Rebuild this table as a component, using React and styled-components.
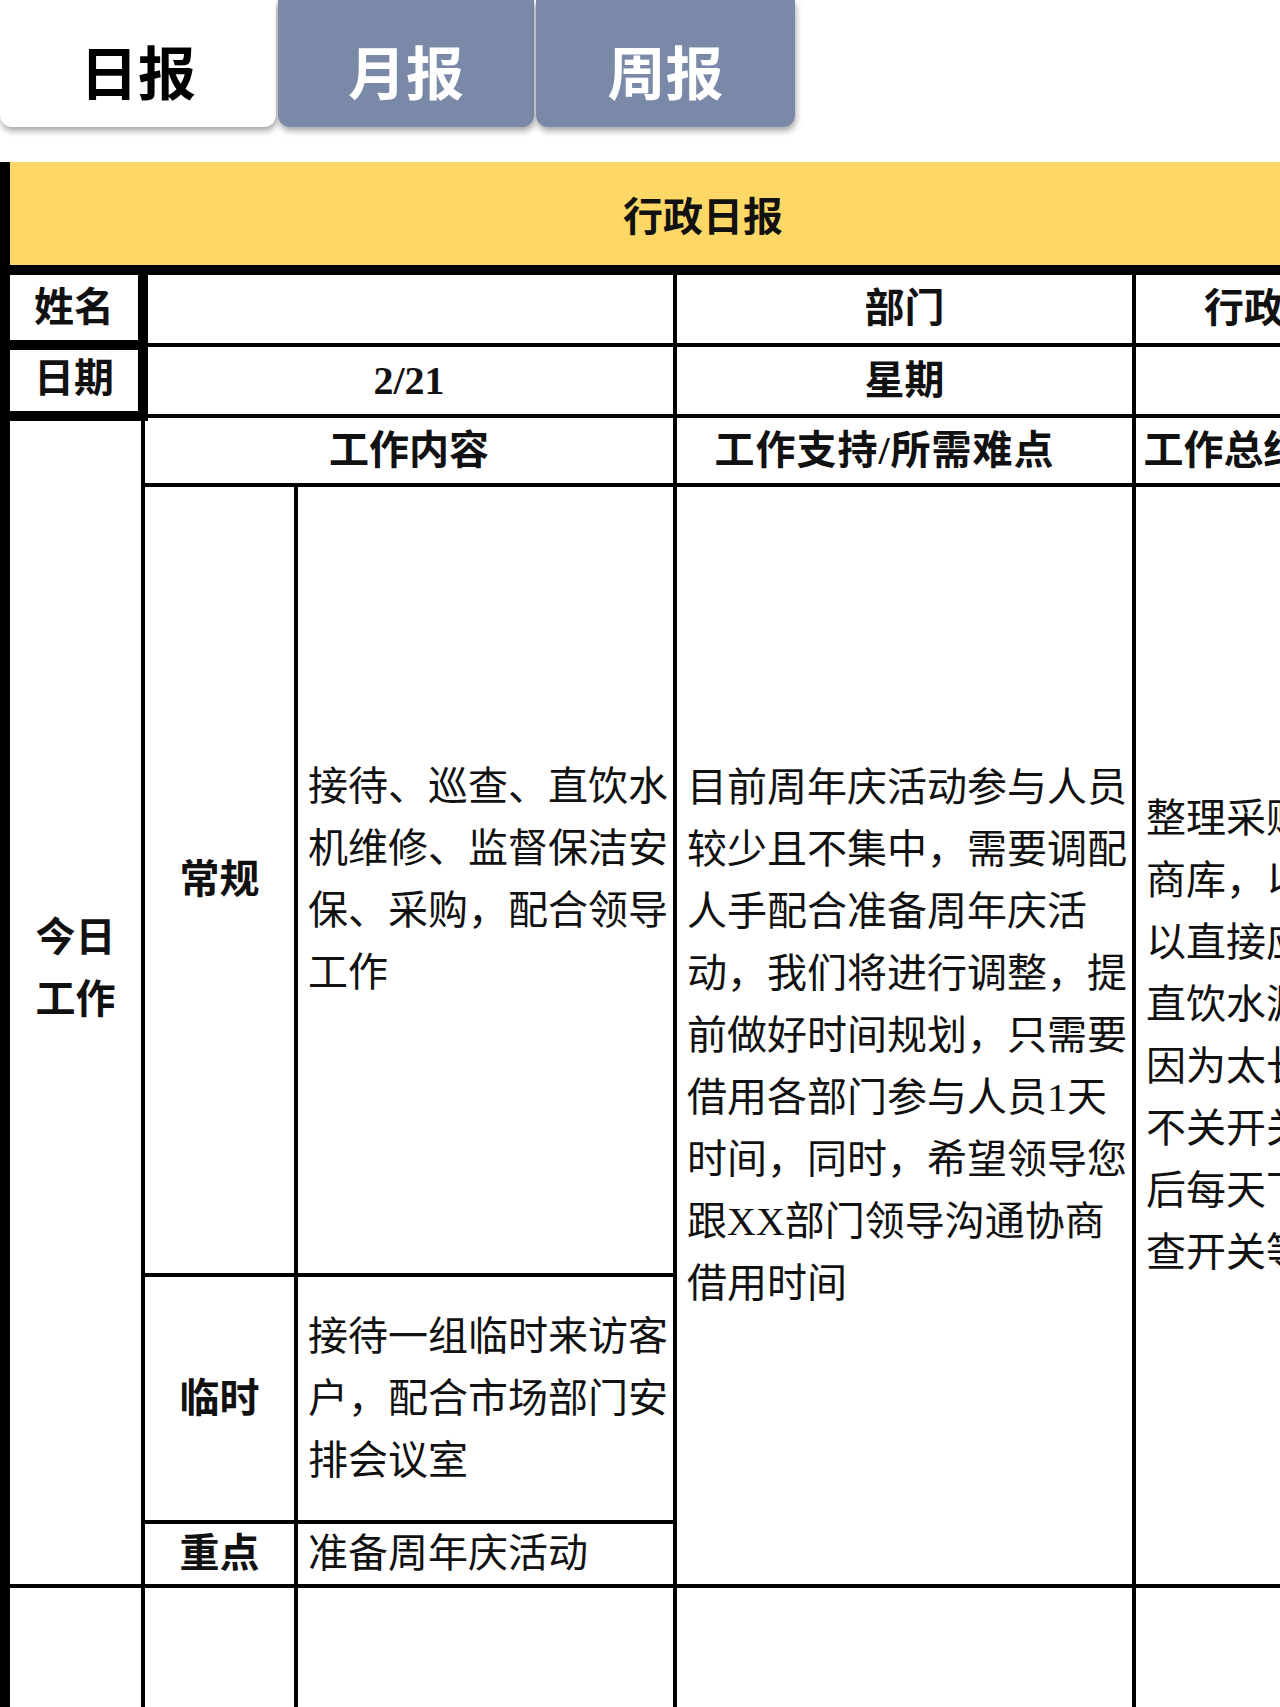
import React from 'react';
import styled, { createGlobalStyle } from 'styled-components';

const GlobalStyle = createGlobalStyle`
  html,
  body {
    margin: 0;
    padding: 0;
    background: #fff;
  }
  body {
    font-family: 'Liberation Serif', 'Noto Sans CJK SC', sans-serif;
    color: #111;
  }
  * {
    box-sizing: border-box;
  }
`;

const Page = styled.div`
  width: 1280px;
  height: 1707px;
  overflow: hidden;
  background: #fff;
`;

const TabBar = styled.div`
  display: flex;
  gap: 2px;
  height: 127px;
  margin-bottom: 35px;
`;

const Tab = styled.div`
  display: flex;
  justify-content: center;
  align-items: center;
  width: ${(props) => props.$width}px;
  padding-top: 12px;
  border-radius: 0 0 12px 12px;
  background-color: ${(props) => (props.$active ? '#ffffff' : '#7b89a9')};
  color: ${(props) => (props.$active ? '#000000' : '#ffffff')};
  box-shadow: 1px 4px 6px rgba(0, 0, 0, 0.35);
  font-family: 'Noto Sans CJK SC', sans-serif;
  font-size: 58px;
  font-weight: 700;
`;

const Sheet = styled.div`
  width: 1406px;
  border-left: 10px solid #000;
`;

const Title = styled.div`
  display: flex;
  justify-content: center;
  align-items: center;
  height: 113px;
  padding-right: 10px;
  background-color: #fdd866;
  border-bottom: 10px solid #000;
  font-family: 'Noto Sans CJK SC', sans-serif;
  font-size: 40px;
  font-weight: 700;
  color: #111;
`;

const Grid = styled.div`
  display: grid;
  grid-template-columns: 135px 153px 379px 459px 270px;
  grid-template-rows: 72px 71px 69px 790px 247px 64px 200px;
`;

const Cell = styled.div`
  grid-column: ${(props) => props.$col};
  grid-row: ${(props) => props.$row};
  display: flex;
  align-items: center;
  justify-content: center;
  border-right: 4px solid #000;
  border-bottom: 4px solid #000;
  overflow: hidden;
  font-size: 40px;
  line-height: 62px;
`;

const HeadCell = styled(Cell)`
  text-align: center;
  font-weight: 700;
  padding-bottom: ${(props) => props.$lift || 0}px;
  padding-right: ${(props) => props.$shift || 0}px;
  letter-spacing: ${(props) => (props.$wide ? 1 : 0)}px;
`;

const MarkCell = styled(HeadCell)`
  position: relative;
  z-index: 1;
  border-right-width: 7px;
  border-bottom-width: 7px;
  box-shadow: 0 0 0 3px #000;
`;

const TextCell = styled(Cell)`
  justify-content: flex-start;
  padding-left: 10px;
  text-align: left;
  font-weight: 400;
`;

const App = () => {
  return (
    <Page>
      <GlobalStyle />
      <TabBar>
        <Tab $width={276} $active>
          日报
        </Tab>
        <Tab $width={256}>月报</Tab>
        <Tab $width={259}>周报</Tab>
      </TabBar>
      <Sheet>
        <Title>行政日报</Title>
        <Grid>
          <MarkCell $col='1' $row='1'>
            姓名
          </MarkCell>
          <Cell $col='2 / 4' $row='1' />
          <HeadCell $col='4' $row='1'>
            部门
          </HeadCell>
          <HeadCell $col='5' $row='1' $shift={10}>
            行政部
          </HeadCell>

          <MarkCell $col='1' $row='2'>
            日期
          </MarkCell>
          <HeadCell $col='2 / 4' $row='2'>
            2/21
          </HeadCell>
          <HeadCell $col='4' $row='2'>
            星期
          </HeadCell>
          <Cell $col='5' $row='2' />

          <HeadCell $col='1' $row='3 / 7' $lift={64}>
            今日
            <br />
            工作
          </HeadCell>
          <HeadCell $col='2 / 4' $row='3'>
            工作内容
          </HeadCell>
          <HeadCell $col='4' $row='3' $shift={40} $wide>
            工作支持/所需难点
          </HeadCell>
          <HeadCell $col='5' $row='3'>
            工作总结/改进
          </HeadCell>

          <HeadCell $col='2' $row='4'>
            常规
          </HeadCell>
          <TextCell $col='3' $row='4'>
            接待、巡查、直饮水机维修、监督保洁安保、采购，配合领导工作
          </TextCell>
          <TextCell $col='4' $row='4 / 7'>
            目前周年庆活动参与人员较少且不集中，需要调配人手配合准备周年庆活动，我们将进行调整，提前做好时间规划，只需要借用各部门参与人员1天时间，同时，希望领导您跟XX部门领导沟通协商借用时间
          </TextCell>
          <TextCell $col='5' $row='4 / 7'>
            整理采购供应商库，以后可以直接应用；直饮水漏水是因为太长时间不关开关，以后每天下班检查开关等。
          </TextCell>

          <HeadCell $col='2' $row='5'>
            临时
          </HeadCell>
          <TextCell $col='3' $row='5'>
            接待一组临时来访客户，配合市场部门安排会议室
          </TextCell>

          <HeadCell $col='2' $row='6'>
            重点
          </HeadCell>
          <TextCell $col='3' $row='6'>
            准备周年庆活动
          </TextCell>

          <Cell $col='1' $row='7' />
          <Cell $col='2' $row='7' />
          <Cell $col='3' $row='7' />
          <Cell $col='4' $row='7' />
          <Cell $col='5' $row='7' />
        </Grid>
      </Sheet>
    </Page>
  );
};

export default App;
